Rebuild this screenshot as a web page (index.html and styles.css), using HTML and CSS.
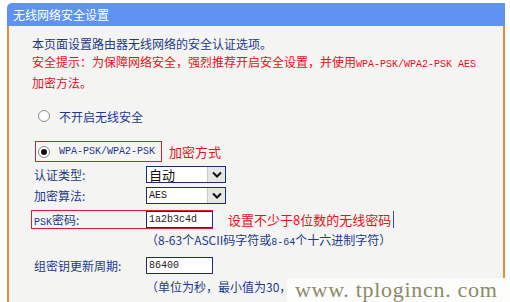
FILE: index.html
```html
<!DOCTYPE html>
<html lang="zh-CN">
<head>
  <meta charset="UTF-8">
  <title>无线网络安全设置</title>
  <link rel="stylesheet" href="styles.css">
</head>
<body>
  <div class="panel">
    <div class="title">无线网络安全设置</div>
    <div class="content">
      <p class="intro">本页面设置路由器无线网络的安全认证选项。<br>
        <span class="warn">安全提示：为保障网络安全，强烈推荐开启安全设置，并使用<span class="mono">WPA-PSK/WPA2-PSK AES</span><br>加密方法。</span>
      </p>

      <div class="opt">
        <span class="radio"></span>
        <span>不开启无线安全</span>
      </div>

      <div class="method-row">
        <div class="method">
          <span class="radio checked"></span>
          <span class="mono">WPA-PSK/WPA2-PSK</span>
        </div>
        <span class="note">加密方式</span>
      </div>

      <div class="field">
        <span class="label">认证类型:</span>
        <div class="select">
          <span class="val big">自动</span>
          <span class="arrow"><svg width="10" height="7" viewBox="0 0 10 7"><polyline points="1,1.5 5,5.5 9,1.5" fill="none" stroke="#111" stroke-width="2"/></svg></span>
        </div>
      </div>

      <div class="field">
        <span class="label">加密算法:</span>
        <div class="select">
          <span class="val mono">AES</span>
          <span class="arrow"><svg width="10" height="7" viewBox="0 0 10 7"><polyline points="1,1.5 5,5.5 9,1.5" fill="none" stroke="#111" stroke-width="2"/></svg></span>
        </div>
      </div>

      <div class="psk-row">
        <div class="psk">
          <span class="label"><span class="mono">PSK</span>密码:</span>
          <div class="input mono">1a2b3c4d</div>
        </div>
        <span class="tip">设置不少于8位数的无线密码</span>
      </div>
      <div class="hint">（8-63个ASCII码字符或<span class="mono">8-64</span>个十六进制字符）</div>

      <div class="field gap">
        <span class="label">组密钥更新周期:</span>
        <div class="input mono">86400</div>
      </div>
      <div class="hint">（单位为秒，最小值为30，不更新则为0）</div>
    </div>
  </div>
  <div class="watermark">www. tplogincn. com</div>
</body>
</html>
```

FILE: styles.css
```css
body {
  margin: 0;
  background: #fff;
  font-family: "Noto Sans CJK SC", sans-serif;
  font-size: 12px;
  color: #1d3a8a;
  height: 302px;
  overflow: hidden;
  position: relative;
}
.panel {
  margin: 3px 5px 0 7px;
}
.title {
  height: 23px;
  line-height: 23px;
  background: #6092f4;
  color: #fff;
  padding-left: 6px;
  border-radius: 5px 0 0 0;
}
.content {
  background: #f4f4f2;
  border-left: 2px solid #e58a3c;
  border-right: 2px solid #e58a3c;
  padding: 9px 0 0 23px;
  height: 267px;
}
.intro {
  margin: 0;
  line-height: 18px;
}
.warn {
  color: #e8101c;
}
.mono {
  font-family: "Liberation Mono", monospace;
  font-size: 10px;
}
.opt {
  display: flex;
  align-items: center;
  height: 18px;
  margin: 15px 0 0 6px;
  gap: 9px;
}
.radio {
  width: 10px;
  height: 10px;
  border: 1px solid #8a8a8a;
  border-radius: 50%;
  background: #fff;
  display: inline-flex;
  align-items: center;
  justify-content: center;
}
.radio.checked::after {
  content: "";
  width: 6px;
  height: 6px;
  border-radius: 50%;
  background: #111;
}
.method-row {
  display: flex;
  align-items: center;
  margin: 16px 0 0 3px;
  gap: 7px;
}
.method {
  display: flex;
  align-items: center;
  box-sizing: border-box;
  height: 21px;
  border: 1px solid #d8202c;
  padding: 0 6px 0 2px;
  gap: 9px;
}
.note, .tip {
  color: #e8101c;
  font-size: 13px;
}
.field {
  display: flex;
  align-items: center;
  height: 17px;
  margin: 4px 0 0 2px;
}
.field.gap {
  margin-top: 6px;
}
.label {
  width: 112px;
}
.select {
  display: flex;
  box-sizing: border-box;
  width: 80px;
  height: 17px;
  border: 1px solid #1c2c6c;
  background: #fff;
  color: #111;
}
.val {
  flex: 1;
  padding-left: 2px;
  line-height: 15px;
}
.val.big {
  font-size: 13px;
}
.arrow {
  width: 17px;
  background: #e6e6e6;
  border-left: 1px solid #c8c8c8;
  display: flex;
  align-items: center;
  justify-content: center;
}
.input {
  box-sizing: border-box;
  width: 67px;
  height: 17px;
  border: 1px solid #1c2c6c;
  background: #fff;
  color: #222;
  padding-left: 2px;
  line-height: 15px;
}
.psk-row {
  display: flex;
  align-items: center;
  margin: 6px 0 0 -1px;
}
.psk {
  display: flex;
  align-items: center;
  box-sizing: border-box;
  height: 19px;
  border: 1px solid #d8202c;
  border-right: none;
  padding-left: 2px;
}
.tip {
  display: flex;
  align-items: center;
  height: 17px;
  padding: 0 2px 0 15px;
  border-right: 1px solid #2c4cb0;
}
.hint {
  margin: 3px 0 0 114px;
  line-height: 16px;
}
.field.gap + .hint {
  margin-top: 5px;
}
.watermark {
  position: absolute;
  left: 287px;
  top: 278px;
  right: 0;
  bottom: 0;
  background: #fcfcfa;
  font-family: "Liberation Serif", serif;
  font-size: 22px;
  letter-spacing: 0.7px;
  color: #8c8a6a;
  padding-left: 8px;
  line-height: 24px;
}
```
